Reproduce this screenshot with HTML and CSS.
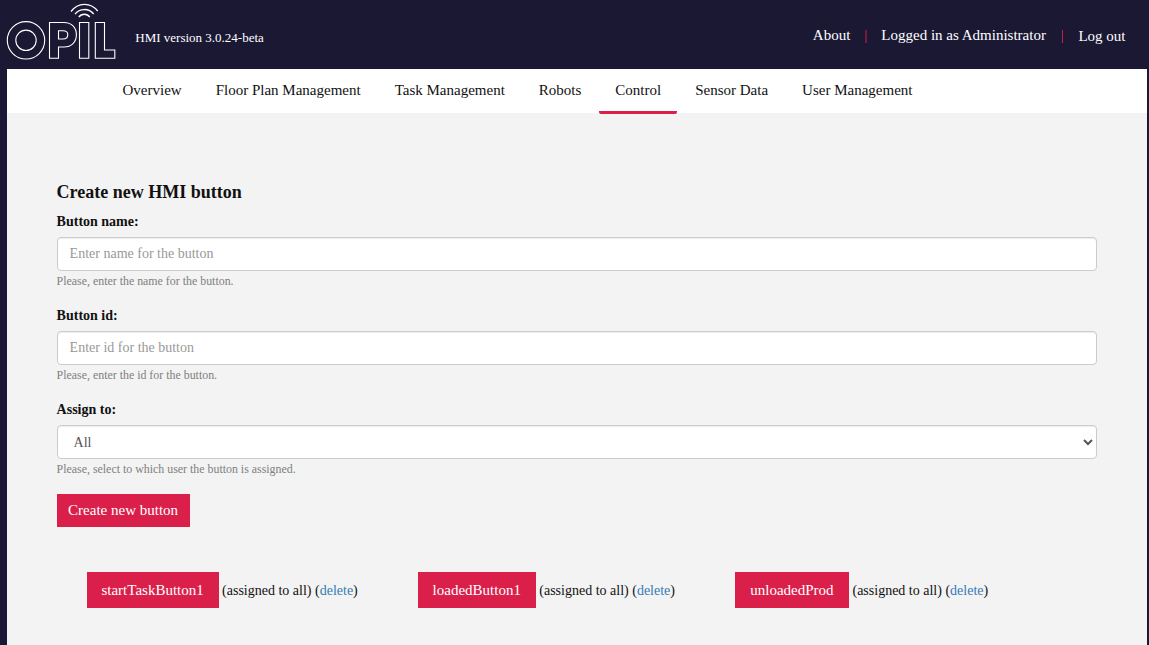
FILE: index.html
```html
<!DOCTYPE html>
<html lang="en">
<head>
<meta charset="utf-8">
<title>OPIL HMI</title>
<link rel="stylesheet" href="styles.css">
</head>
<body>
<header class="top">
  <svg class="logo" viewBox="0 0 120 64" role="img" aria-label="OPIL">
    <circle cx="26" cy="40.3" r="18.7"/>
    <circle cx="26" cy="40.3" r="10.2"/>
    <path d="M49.5 22.5H64C71.5 22.5 76.4 27.5 76.4 34.8S71.5 47 64 47H58.5V58.3H49.5Z"/>
    <path d="M58.5 30.8H63C66 30.8 67.8 32.3 67.8 34.8S66 39 63 39H58.5Z"/>
    <path d="M79.5 22.5H88.8V58.3H79.5Z"/>
    <path d="M95.3 22.5H104.5V50H114.8V58.3H95.3Z"/>
    <path class="wave" d="M71 11.5C78 2 90.500 2 97.700 11M75 14.200C79.500 8 89 8 93.700 14M78.800 17C81.500 13.300 87 13.300 89.800 17"/>
  </svg>
  <span class="version">HMI version 3.0.24-beta</span>
  <nav class="account">
    <a>About</a><i class="divider dim"></i><a>Logged in as Administrator</a><i class="divider"></i><a class="logout">Log out</a>
  </nav>
</header>
<div class="panel">
  <nav class="tabs">
    <a>Overview</a><a>Floor Plan Management</a><a>Task Management</a><a>Robots</a><a class="active">Control</a><a>Sensor Data</a><a>User Management</a>
  </nav>
  <main class="content">
    <h1>Create new HMI button</h1>
    <form>
      <div class="group">
        <label for="name">Button name:</label>
        <input id="name" class="control" placeholder="Enter name for the button">
        <small>Please, enter the name for the button.</small>
      </div>
      <div class="group">
        <label for="bid">Button id:</label>
        <input id="bid" class="control" placeholder="Enter id for the button">
        <small>Please, enter the id for the button.</small>
      </div>
      <div class="group">
        <label for="assign">Assign to:</label>
        <select id="assign" class="control"><option>All</option></select>
        <small>Please, select to which user the button is assigned.</small>
      </div>
      <button type="button" class="btn create">Create new button</button>
    </form>
    <div class="list">
      <div class="item"><button class="btn start">startTaskButton1</button><span>(assigned to all) (<a>delete</a>)</span></div>
      <div class="item"><button class="btn loaded">loadedButton1</button><span>(assigned to all) (<a>delete</a>)</span></div>
      <div class="item"><button class="btn unloaded">unloadedProd</button><span>(assigned to all) (<a>delete</a>)</span></div>
    </div>
  </main>
</div>
</body>
</html>
```
FILE: styles.css
```css
* { box-sizing: border-box; }
body {
  margin: 0;
  height: 645px;
  overflow: hidden;
  background: #1b1834;
  color: #111;
  font: 14px/20px "Liberation Serif", "Times New Roman", serif;
}
.top { display: flex; height: 69px; color: #fff; }
.logo { width: 120px; height: 64px; fill: none; stroke: #fff; stroke-width: 1.1; }
.logo .wave { stroke-width: 1.3; }
.version { margin: 28px 0 0 15.300px; font-size: 13px; }
.account { display: flex; margin: 25px 23.500px 0 auto; font-size: 15px; }
.logout { padding-top: 1px; }
.divider { width: 1px; height: 13px; margin: 5px 15.500px 0 16px; background: #c81c45; }
.divider.dim { width: 2px; margin: 5px 14px 0 15px; background: #791a3c; }
.panel { width: 1140px; height: 576px; margin-left: 7px; background: #f3f3f3; }
.tabs { display: flex; gap: 2px; height: 44px; padding-left: 99.500px; background: #fff; font-size: 15px; }
.tabs a { height: 45px; padding: 11px 16px 0; border-bottom: 3px solid transparent; border-radius: 2px; }
.tabs .active { border-bottom-color: #db1f4b; }
.content { padding: 69px 50.400px 0 49.600px; }
h1 { margin: 0 0 10px; font-size: 18px; line-height: 20px; }
.group { height: 79px; margin-bottom: 15px; }
label { display: block; margin-bottom: 5px; font-weight: bold; }
.control {
  display: block;
  width: 100%;
  height: 34px;
  padding: 6px 12px;
  border: 1px solid #ccc;
  border-radius: 4px;
  background-color: #fff;
  box-shadow: inset 0 1px 1px rgba(0, 0, 0, .075);
  color: #555;
  font: inherit;
}
.control::placeholder { color: #999; }
small { display: block; color: #808080; font-size: 11.900px; }
.btn { padding: 0; border: 0; background: #db1f4b; color: #fff; font: 15px/20px "Liberation Serif", serif; }
.create { display: block; width: 133px; height: 33px; padding-bottom: 1px; }
.list { display: flex; gap: 60px; margin: 45px 0 0 30px; }
.item { display: flex; align-items: center; gap: 3.500px; white-space: nowrap; }
.item .btn { height: 36px; }
.item span { padding-top: 1px; }
.start { width: 132px; }
.loaded { width: 118px; }
.unloaded { width: 114px; }
.item a { color: #337ab7; }
```
